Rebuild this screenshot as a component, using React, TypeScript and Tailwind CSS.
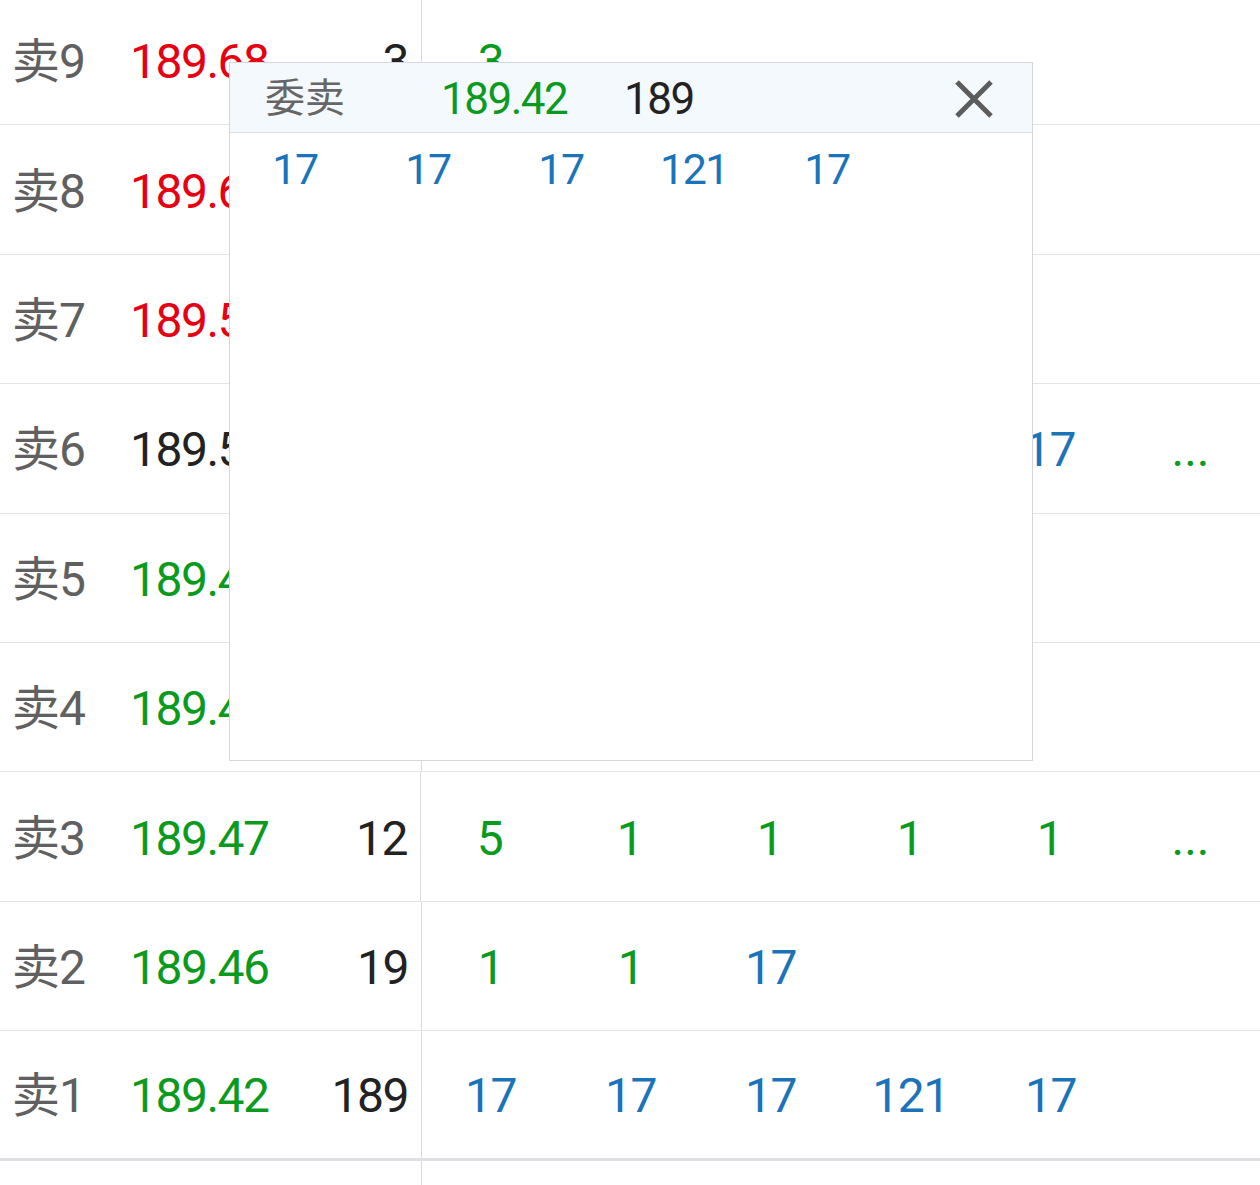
const RED = "text-[#e60012]"
const GREEN = "text-[#0a9a1e]"
const BLACK = "text-[#222222]"
const BLUE = "text-[#1b73b9]"

type Q = { v: string; c: "g" | "b" }

interface Row {
  label: string
  price: string
  priceColor: string
  vol: string
  queue: Q[]
  more?: boolean
}

const rows: Row[] = [
  { label: "卖9", price: "189.68", priceColor: RED, vol: "3", queue: [{ v: "3", c: "g" }] },
  { label: "卖8", price: "189.62", priceColor: RED, vol: "2", queue: [{ v: "2", c: "g" }] },
  { label: "卖7", price: "189.58", priceColor: RED, vol: "5", queue: [{ v: "5", c: "g" }] },
  {
    label: "卖6",
    price: "189.50",
    priceColor: BLACK,
    vol: "40",
    queue: [
      { v: "1", c: "g" },
      { v: "1", c: "g" },
      { v: "1", c: "g" },
      { v: "1", c: "g" },
      { v: "17", c: "b" },
    ],
    more: true,
  },
  { label: "卖5", price: "189.49", priceColor: GREEN, vol: "4", queue: [{ v: "4", c: "g" }] },
  { label: "卖4", price: "189.48", priceColor: GREEN, vol: "2", queue: [{ v: "2", c: "g" }] },
  {
    label: "卖3",
    price: "189.47",
    priceColor: GREEN,
    vol: "12",
    queue: [
      { v: "5", c: "g" },
      { v: "1", c: "g" },
      { v: "1", c: "g" },
      { v: "1", c: "g" },
      { v: "1", c: "g" },
    ],
    more: true,
  },
  {
    label: "卖2",
    price: "189.46",
    priceColor: GREEN,
    vol: "19",
    queue: [
      { v: "1", c: "g" },
      { v: "1", c: "g" },
      { v: "17", c: "b" },
    ],
  },
  {
    label: "卖1",
    price: "189.42",
    priceColor: GREEN,
    vol: "189",
    queue: [
      { v: "17", c: "b" },
      { v: "17", c: "b" },
      { v: "17", c: "b" },
      { v: "121", c: "b" },
      { v: "17", c: "b" },
    ],
  },
]

const font = { fontFamily: "Roboto, 'Noto Sans CJK SC', sans-serif" }

const CloseIcon = () => (
  <svg width="40" height="40" viewBox="0 0 40 40">
    <path d="M3 3 L37 37 M37 3 L3 37" stroke="#5c5c5c" strokeWidth="5" strokeLinecap="butt" />
  </svg>
)

export default function App() {
  return (
    <div className="relative w-[1260px] h-[1185px] overflow-hidden bg-white" style={font}>
      <div className="flex flex-col -mt-[4px] h-[1189px]">
        {rows.map((r, i) => (
          <div
            key={r.label}
            className={`flex h-[129.4px] shrink-0 ${
              i === rows.length - 1 ? "border-b-[3px] border-[#dfdfe4]" : "border-b border-[#e3e3e8]"
            }`}
          >
            <div className="flex items-center w-[422px] pl-[12px] pr-[13px] pt-[4px] border-r border-[#d9d9de]">
              <span className="w-[118px] text-[48px] text-[#606060] tracking-[-1px]">{r.label}</span>
              <span className={`flex-1 text-[48px] tracking-[-1.5px] ${r.priceColor}`}>{r.price}</span>
              <span className={`text-[48px] tracking-[-1.5px] ${BLACK}`}>{r.vol}</span>
            </div>
            <div className="flex items-center pt-[4px]">
              {r.queue.map((q, j) => (
                <span
                  key={j}
                  className={`w-[140px] pr-[3px] text-center text-[48px] tracking-[-1.5px] ${q.c === "g" ? GREEN : BLUE}`}
                >
                  {q.v}
                </span>
              ))}
              {r.more && (
                <span className={`w-[139px] text-center text-[48px] ${GREEN}`}>...</span>
              )}
            </div>
          </div>
        ))}
        <div className="flex flex-1">
          <div className="w-[422px] border-r border-[#d9d9de]" />
        </div>
      </div>

      {/* 委卖 popup */}
      <div className="absolute left-[229px] top-[62px] w-[804px] h-[699px] bg-white border border-[#d6d6dc] flex flex-col">
        <div className="flex items-center h-[70px] bg-[#f4f9fe] border-b border-[#dcdce2] pl-[35px] pr-[38px] pt-[2px]">
          <span className="w-[176px] text-[40px] text-[#666666]">委卖</span>
          <span className={`w-[183px] text-[44px] tracking-[-1.5px] ${GREEN}`}>189.42</span>
          <span className={`flex-1 text-[44px] tracking-[-1.5px] ${BLACK}`}>189</span>
          <CloseIcon />
        </div>
        <div className="flex items-center h-[73px]">
          {["17", "17", "17", "121", "17"].map((v, j) => (
            <span key={j} className={`w-[133px] pr-[3px] text-center text-[43px] tracking-[-1.5px] ${BLUE}`}>
              {v}
            </span>
          ))}
        </div>
      </div>
    </div>
  )
}
